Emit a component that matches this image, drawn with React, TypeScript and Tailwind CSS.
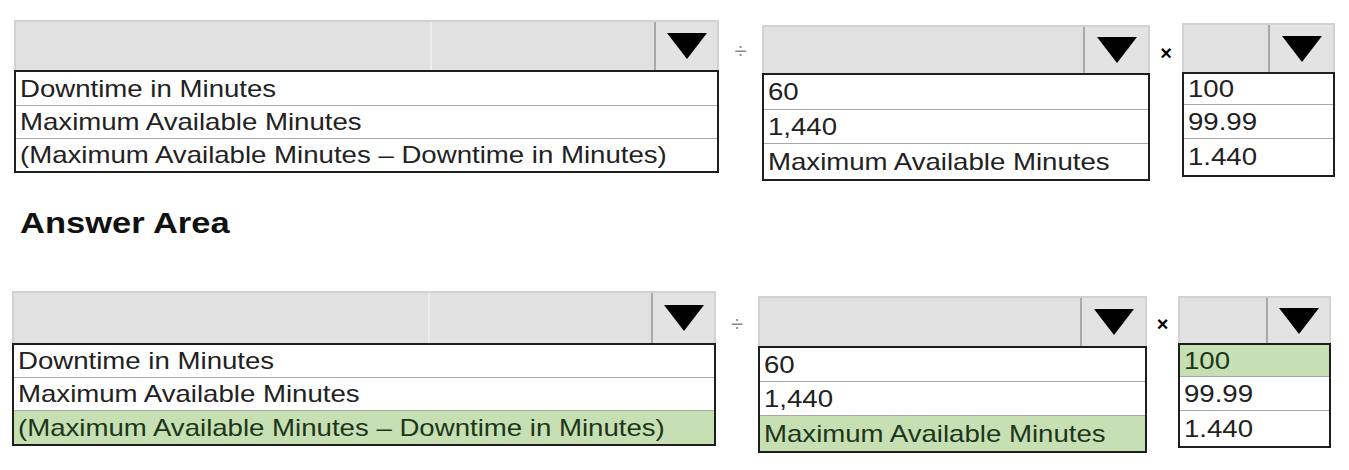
import React from 'react'

type Row = { label: string; h: string; on?: boolean }

type DropProps = {
  box: string
  head: string
  btn: string
  rows: Row[]
  split?: boolean
}

function Arrow() {
  return (
    <svg width="40" height="26" viewBox="0 0 40 26">
      <polygon points="0,0 40,0 20,26" fill="#000" />
    </svg>
  )
}

function Dropdown({ box, head, btn, rows, split }: DropProps) {
  return (
    <div className={`flex flex-col ${box}`}>
      <div className={`flex bg-[#e1e1e1] border-t-2 border-x-2 border-[#d2d2d2] ${head}`}>
        <div className="flex flex-1">
          {split && <div className="w-[416px] border-r-2 border-[#ececec]" />}
        </div>
        <div className={`flex items-center justify-center border-l-2 border-[#a9a9a9] bg-[#e3e3e3] ${btn}`}>
          <Arrow />
        </div>
      </div>
      <div className="border-2 border-[#1e1e1e] bg-white">
        {rows.map((r, i) => (
          <div
            key={i}
            className={`flex items-center px-[4px] whitespace-nowrap ${r.h} ${
              i > 0 ? 'border-t border-[#a8a8a8]' : ''
            } ${r.on ? 'bg-[#c6e0b4] text-[#1d361a]' : 'text-[#222]'}`}
          >
            <span className="inline-block origin-left scale-x-[1.15] text-[24px] leading-[24px]">
              {r.label}
            </span>
          </div>
        ))}
      </div>
    </div>
  )
}

const long = '(Maximum Available Minutes \u2013 Downtime in Minutes)'

export default function App() {
  return (
    <div className="w-[1349px] h-[470px] bg-white overflow-hidden font-['Liberation_Sans',Arial,sans-serif]">
      <div className="flex items-start pl-[14px] pt-[20px]">
        <Dropdown
          box="w-[705px]"
          head="h-[50px]"
          btn="w-[63px]"
          split
          rows={[
            { label: 'Downtime in Minutes', h: 'h-[33px]' },
            { label: 'Maximum Available Minutes', h: 'h-[33px]' },
            { label: long, h: 'h-[33px]' },
          ]}
        />
        <div className="w-[43px] mt-[14px] flex justify-center text-[22px] text-[#8a8a8a]">÷</div>
        <Dropdown
          box="w-[388px] mt-[5px]"
          head="h-[48px]"
          btn="w-[65px]"
          rows={[
            { label: '60', h: 'h-[34px]' },
            { label: '1,440', h: 'h-[34px]' },
            { label: 'Maximum Available Minutes', h: 'h-[36px]' },
          ]}
        />
        <div className="w-[32px] mt-[18px] flex justify-center text-[20px] font-bold text-black">×</div>
        <Dropdown
          box="w-[153px] mt-[3px]"
          head="h-[49px]"
          btn="w-[65px]"
          rows={[
            { label: '100', h: 'h-[30px]' },
            { label: '99.99', h: 'h-[34px]' },
            { label: '1.440', h: 'h-[37px]' },
          ]}
        />
      </div>

      <div className="pl-[20px] mt-[24px]">
        <h2 className="inline-block origin-left scale-x-[1.15] text-[30px] leading-[36px] font-bold text-[#111]">
          Answer Area
        </h2>
      </div>

      <div className="flex items-start pl-[12px] mt-[50px]">
        <Dropdown
          box="w-[704px]"
          head="h-[52px]"
          btn="w-[63px]"
          split
          rows={[
            { label: 'Downtime in Minutes', h: 'h-[32px]' },
            { label: 'Maximum Available Minutes', h: 'h-[33px]' },
            { label: long, h: 'h-[34px]', on: true },
          ]}
        />
        <div className="w-[42px] mt-[16px] flex justify-center text-[22px] text-[#8a8a8a]">÷</div>
        <Dropdown
          box="w-[389px] mt-[5px]"
          head="h-[50px]"
          btn="w-[65px]"
          rows={[
            { label: '60', h: 'h-[33px]' },
            { label: '1,440', h: 'h-[34px]' },
            { label: 'Maximum Available Minutes', h: 'h-[36px]', on: true },
          ]}
        />
        <div className="w-[31px] mt-[18px] flex justify-center text-[20px] font-bold text-black">×</div>
        <Dropdown
          box="w-[153px] mt-[5px]"
          head="h-[47px]"
          btn="w-[63px]"
          rows={[
            { label: '100', h: 'h-[31px]', on: true },
            { label: '99.99', h: 'h-[34px]' },
            { label: '1.440', h: 'h-[36px]' },
          ]}
        />
      </div>
    </div>
  )
}
